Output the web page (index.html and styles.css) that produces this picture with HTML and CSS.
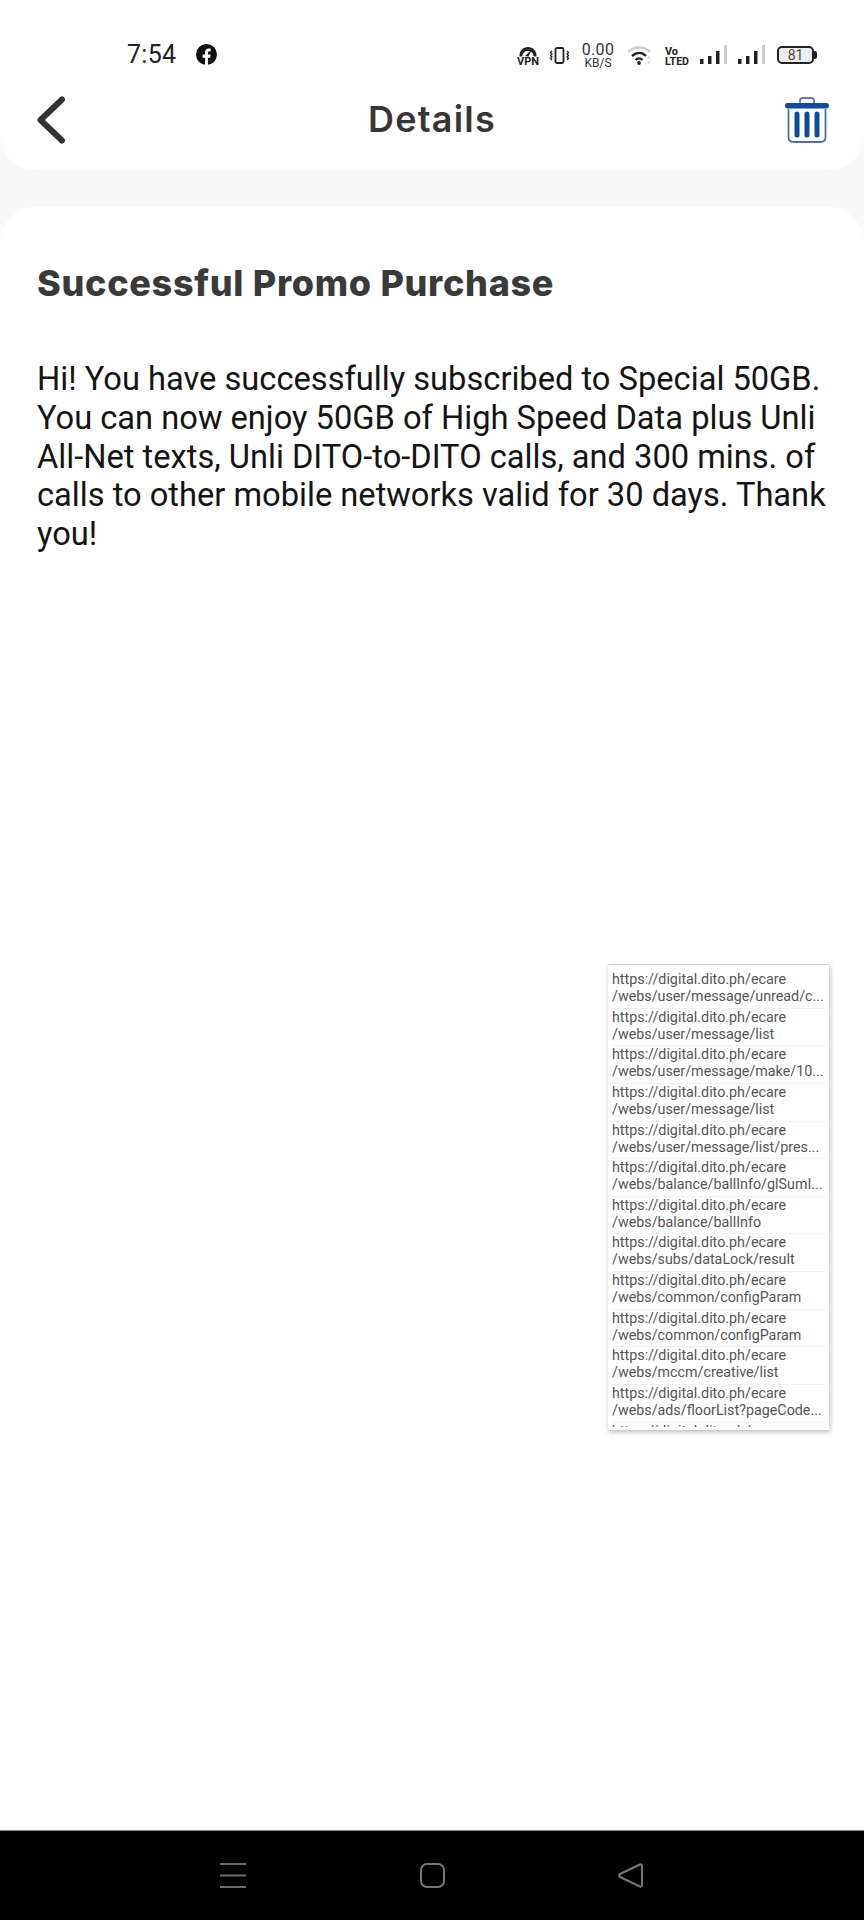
FILE: index.html
```html
<!DOCTYPE html>
<html lang="en">
<head>
<meta charset="utf-8">
<title>Details</title>
<link rel="stylesheet" href="styles.css">
</head>
<body>
<div class="screen">
  <header class="top">
    <div class="status">
      <span class="time">7:54</span>
      <svg class="fb" viewBox="0 0 20 20"><circle cx="10" cy="10" r="10" fill="#111"/><path d="M8.600 20v-7H6.300v-3h2.300V8c0-2.400 1.400-3.700 3.500-3.700.9 0 1.900.2 1.900.2v2.400h-1.100c-1.100 0-1.500.7-1.500 1.400V10h2.500l-.4 3h-2.100v7z" fill="#fff"/></svg>
      <div class="status-right">
        <svg class="ic-vpn" viewBox="0 0 22 19"><path d="M2.500 10.500C2 5 6 1 11 1s9 4 8.500 9.500h-2.800C16.500 7 14 5 11 5S5.500 7 5.300 10.500z" fill="#222"/><path d="M8 10l7-6.500-3.500 7z" fill="#222"/><text x="0" y="19" class="vpn-t" textLength="22" lengthAdjust="spacingAndGlyphs">VPN</text></svg>
        <svg class="ic-vib" viewBox="0 0 21 17"><rect x="6.500" y="1" width="8" height="15" rx="1.500" fill="none" stroke="#222" stroke-width="1.800"/><path d="M3 4l-1.500 1.500L3 7 1.500 8.500 3 10l-1.500 1.500L3 13M18 4l1.500 1.500L18 7l1.500 1.500L18 10l1.500 1.500L18 13" fill="none" stroke="#222" stroke-width="1.300"/></svg>
        <div class="speed"><span class="speed-num">0.00</span><span class="speed-unit">KB/S</span></div>
        <svg class="ic-wifi" viewBox="0 0 26 20"><path d="M1 7C7 1 17 1 23 7" fill="none" stroke="#ccc" stroke-width="2.400"/><path d="M5 11c4.500-4 10-4 14 0M8.500 15c2-2 5-2 7 0" fill="none" stroke="#222" stroke-width="2.400"/><circle cx="12" cy="18" r="1.900" fill="#222"/><path d="M22 11l2 2.500h-4zM22 19l2-2.500h-4z" fill="#ccc"/></svg>
        <svg class="ic-volte" viewBox="0 0 24 19"><text x="0" y="9" class="volte-t" textLength="13" lengthAdjust="spacingAndGlyphs">Vo</text><text x="0" y="19" class="volte-t" textLength="24" lengthAdjust="spacingAndGlyphs">LTED</text></svg>
        <svg class="ic-sig" viewBox="0 0 27 20"><rect x="0" y="14" width="3.500" height="5" fill="#222"/><rect x="8" y="11" width="3.500" height="8" fill="#222"/><rect x="16" y="6" width="3.500" height="13" fill="#222"/><rect x="24" y="0" width="3" height="19" fill="#ccc"/></svg>
        <svg class="ic-sig" viewBox="0 0 27 20"><rect x="0" y="14" width="3.500" height="5" fill="#222"/><rect x="8" y="11" width="3.500" height="8" fill="#222"/><rect x="16" y="6" width="3.500" height="13" fill="#222"/><rect x="24" y="0" width="3" height="19" fill="#ccc"/></svg>
        <div class="battery"><div class="battery-body">81</div><div class="battery-cap"></div></div>
      </div>
    </div>
    <div class="bar">
      <svg class="back" viewBox="0 0 30 48"><path d="M26 3.500L4.500 24 26 44.500" fill="none" stroke="#333" stroke-width="6" stroke-linecap="round" stroke-linejoin="round"/></svg>
      <h1 class="page-title">Details</h1>
      <svg class="trash" viewBox="0 0 44 46"><path d="M15 7V3.500C15 2 16 1 17.500 1h9C28 1 29 2 29 3.500V7" fill="none" stroke="#5b7fae" stroke-width="1.800"/><rect x="0" y="6" width="44" height="5.500" rx="2.700" fill="#0f4a9e"/><path d="M3.500 12v28c0 3 2 5 5 5h27c3 0 5-2 5-5V12" fill="none" stroke="#4d6f9c" stroke-width="1.800"/><path d="M12 17v21M22 17v21M32 17v21" stroke="#0f4a9e" stroke-width="5" stroke-linecap="round"/></svg>
    </div>
  </header>

  <main class="card">
    <h2 class="msg-title">Successful Promo Purchase</h2>
    <p class="msg-body">Hi! You have successfully subscribed to Special 50GB. You can now enjoy 50GB of High Speed Data plus Unli All-Net texts, Unli DITO-to-DITO calls, and 300 mins. of calls to other mobile networks valid for 30 days. Thank you!</p>
  </main>

  <nav class="nav">
    <svg class="nav-menu" viewBox="0 0 26 25"><path d="M0 1h26M0 12.500h26M0 24h26" stroke="#6c6c6c" stroke-width="2"/></svg>
    <svg class="nav-home" viewBox="0 0 25 25"><rect x="1" y="1" width="23" height="23" rx="6" fill="none" stroke="#777" stroke-width="2"/></svg>
    <svg class="nav-back" viewBox="0 0 25 25"><path d="M22 1.500c1-.4 2 .2 2 1.300v19.400c0 1.100-1 1.700-2 1.300L2 14c-1.300-.7-1.300-2.300 0-3z" fill="none" stroke="#777" stroke-width="2"/></svg>
  </nav>

  <aside class="log">
    <div class="log-list">
      <div class="log-row"><div>https://digital.dito.ph/ecare</div><div>/webs/user/message/unread/c...</div></div>
      <div class="log-row"><div>https://digital.dito.ph/ecare</div><div>/webs/user/message/list</div></div>
      <div class="log-row"><div>https://digital.dito.ph/ecare</div><div>/webs/user/message/make/10...</div></div>
      <div class="log-row"><div>https://digital.dito.ph/ecare</div><div>/webs/user/message/list</div></div>
      <div class="log-row"><div>https://digital.dito.ph/ecare</div><div>/webs/user/message/list/pres...</div></div>
      <div class="log-row"><div>https://digital.dito.ph/ecare</div><div>/webs/balance/ballInfo/glSumI...</div></div>
      <div class="log-row"><div>https://digital.dito.ph/ecare</div><div>/webs/balance/ballInfo</div></div>
      <div class="log-row"><div>https://digital.dito.ph/ecare</div><div>/webs/subs/dataLock/result</div></div>
      <div class="log-row"><div>https://digital.dito.ph/ecare</div><div>/webs/common/configParam</div></div>
      <div class="log-row"><div>https://digital.dito.ph/ecare</div><div>/webs/common/configParam</div></div>
      <div class="log-row"><div>https://digital.dito.ph/ecare</div><div>/webs/mccm/creative/list</div></div>
      <div class="log-row"><div>https://digital.dito.ph/ecare</div><div>/webs/ads/floorList?pageCode...</div></div>
      <div class="log-row"><div>https://digital.dito.ph/ecare</div></div>
    </div>
  </aside>
</div>
</body>
</html>
```
FILE: styles.css
```css
* { box-sizing: border-box; }
html, body { margin: 0; padding: 0; }
body { background: #f9f9f9; font-family: "Roboto", "Liberation Sans", sans-serif; }

.screen {
  position: relative;
  width: 864px;
  height: 1920px;
  display: flex;
  flex-direction: column;
  overflow: hidden;
  background: #f9f9f9;
}

.top {
  height: 170px;
  flex: none;
  background: #fff;
  border-radius: 0 0 36px 36px;
}

.status {
  height: 85px;
  padding: 44px 47px 0 127px;
  display: flex;
  align-items: flex-start;
}
.time { font-size: 25px; line-height: 22px; color: #222; letter-spacing: 0.3px; }
.fb { width: 21px; height: 21px; margin-left: 20px; }
.status-right { margin-left: auto; display: flex; align-items: flex-start; }

.ic-vpn { width: 22px; height: 19px; margin-top: 2px; overflow: visible; }
.vpn-t { font: 700 10px "Roboto", sans-serif; fill: #222; }
.ic-vib { width: 21px; height: 17px; margin: 3px 0 0 10px; }
.speed { width: 34px; margin: -1px 0 0 11px; display: flex; flex-direction: column; align-items: center; color: #333; }
.speed-num { font-size: 16px; line-height: 14px; letter-spacing: 0.3px; }
.speed-unit { font-size: 12px; line-height: 12px; }
.ic-wifi { width: 26px; height: 20px; margin: 1px 0 0 12px; }
.ic-volte { width: 24px; height: 19px; margin: 2px 0 0 12px; overflow: visible; }
.volte-t { font: 700 11px "Roboto", sans-serif; fill: #222; }
.ic-sig { width: 27px; height: 20px; margin: 1px 0 0 11px; }
.battery { display: flex; align-items: center; margin: 2px 0 0 12px; }
.battery-body {
  width: 37px;
  height: 18px;
  border: 2px solid #222;
  border-radius: 5px;
  background: #eee;
  font-size: 14px;
  line-height: 14px;
  text-align: center;
  color: #444;
}
.battery-cap { width: 3px; height: 8px; background: #222; border-radius: 0 2px 2px 0; }

.bar {
  position: relative;
  height: 85px;
  padding: 11px 35px 0 36px;
  display: flex;
  justify-content: space-between;
  align-items: flex-start;
}
.back { width: 30px; height: 48px; }
.page-title {
  position: absolute;
  left: 0;
  right: 0;
  top: 12px;
  margin: 0;
  text-align: center;
  font: 600 36px/44px "Inter", sans-serif;
  letter-spacing: 1.200px;
  color: #3a3535;
}
.trash { width: 44px; height: 46px; margin-top: 1px; }

.card {
  flex: 1;
  margin-top: 37px;
  margin-bottom: 4px;
  padding: 55px 37px 0;
  background: #fff;
  border-radius: 36px 36px 0 0;
}
.msg-title {
  margin: 0;
  font: 800 36px/42px "Inter", sans-serif;
  letter-spacing: 0.700px;
  color: #3a3a3a;
}
.msg-body {
  margin: 56px 0 0;
  font-size: 32.650px;
  line-height: 38.800px;
  color: #141414;
}

.nav {
  height: 90px;
  flex: none;
  background: #000;
  border-top: 1px solid #888;
  padding-top: 32px;
  display: flex;
  align-items: flex-start;
}
.nav-menu { width: 26px; height: 25px; margin-left: 220px; }
.nav-home { width: 25px; height: 25px; margin-left: 174px; }
.nav-back { width: 25px; height: 25px; margin-left: 173px; }

.log {
  position: absolute;
  left: 608px;
  top: 964px;
  width: 221px;
  height: 466px;
  overflow: hidden;
  background: #fff;
  border-top: 1px solid #cfd8d8;
  box-shadow: 1px 2px 5px rgba(0, 0, 0, .28);
}
.log-list {
  height: 462px;
  padding: 6px 4px 0;
  overflow: hidden;
}
.log-row {
  height: 37.650px;
  padding-bottom: 3px;
  border-bottom: 1px solid #f2f2f2;
  font-size: 14.300px;
  line-height: 17px;
  color: #555;
  white-space: nowrap;
  overflow: hidden;
}
```
